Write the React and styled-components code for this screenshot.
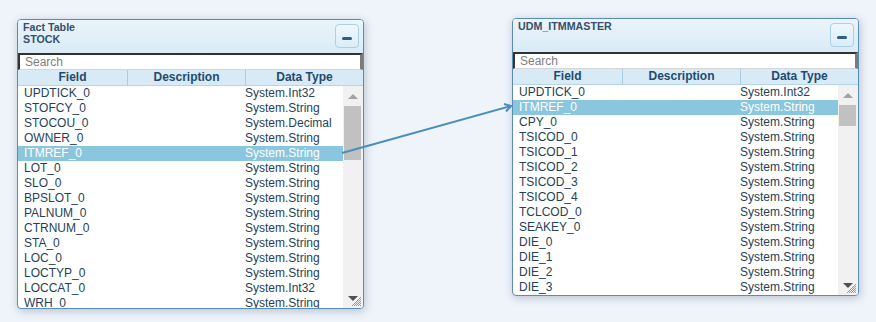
import React from "react";
import styled, { createGlobalStyle } from "styled-components";

const GlobalStyle = createGlobalStyle`
  html, body {
    margin: 0;
    padding: 0;
    background: #eef4fa;
    font-family: "Liberation Sans", Arial, sans-serif;
  }
  * { box-sizing: border-box; }
`;

const Canvas = styled.div`
  position: relative;
  width: 876px;
  height: 322px;
  overflow: hidden;
  display: flex;
  align-items: flex-start;
  gap: 148px;
  padding: 18px 0 0 17px;
`;

const Panel = styled.div`
  position: relative;
  width: 347px;
  margin-top: ${(p) => p.$offset || 0}px;
  border: 1px solid #5a8cb6;
  border-radius: 4px;
  background: #fff;
  box-shadow: 1px 2px 9px rgba(40, 60, 90, 0.28);
  overflow: hidden;
  display: flex;
  flex-direction: column;
`;

const Header = styled.div`
  height: 33px;
  display: flex;
  justify-content: space-between;
  align-items: flex-start;
  padding: 1px 4px 0 5px;
  background: linear-gradient(#eaf4fb, #d9ebf6);
`;

const Title = styled.div`
  font-size: 10.7px;
  line-height: 12px;
  font-weight: bold;
  color: #34506a;
`;

const MinButton = styled.button`
  width: 24px;
  height: 24px;
  margin-top: 3px;
  padding: 4px 0 0 0;
  border: 1px solid #a9d1e7;
  border-radius: 4px;
  background: linear-gradient(#eef7fd, #dcedf8);
  display: flex;
  align-items: center;
  justify-content: center;
`;

const Dash = styled.span`
  display: block;
  width: 10px;
  height: 3px;
  border-radius: 2px;
  background: #2e5e86;
`;

const Search = styled.input`
  display: block;
  width: 100%;
  height: 17px;
  margin: 0;
  padding: 0 0 0 5px;
  border-style: solid;
  border-width: 2px 3px 1px 2px;
  border-color: #333 #7b7b7b #d6d6d6 #333;
  font-family: "Liberation Sans", Arial, sans-serif;
  font-size: 12px;
  outline: none;
  &::placeholder { color: #808080; }
`;

const ColHeader = styled.div`
  display: grid;
  grid-template-columns: 109px 118px 118px;
  height: 16px;
  background: #d8eaf5;
  border-bottom: 1px solid #b5d6ea;
`;

const ColCell = styled.div`
  font-size: 12px;
  line-height: 15px;
  font-weight: bold;
  color: #1f4a70;
  text-align: center;
  border-left: ${(p) => (p.$first ? "none" : "1px solid #a7cde4")};
`;

const Body = styled.div`
  display: flex;
  height: ${(p) => p.$h}px;
`;

const Rows = styled.div`
  flex: 1;
  overflow: hidden;
`;

const Row = styled.div`
  display: grid;
  grid-template-columns: 227px 1fr;
  height: 15px;
  font-size: 12px;
  line-height: 15px;
  white-space: nowrap;
  color: ${(p) => (p.$sel ? "#fff" : "#263f58")};
  background: ${(p) => (p.$sel ? "#8ac6dd" : "transparent")};
`;

const FieldCell = styled.span`
  padding-left: 6px;
`;

const TypeCell = styled.span``;

const Scroll = styled.div`
  width: 20px;
  background: #f1f1f1;
  display: flex;
  flex-direction: column;
`;

const ScrollBtn = styled.div`
  height: 20px;
  display: flex;
  align-items: center;
  justify-content: center;
`;

const Tri = styled.span`
  width: 0;
  height: 0;
  border-left: 5px solid transparent;
  border-right: 5px solid transparent;
  ${(p) =>
    p.$up
      ? "border-bottom: 5px solid #a3a3a3;"
      : "border-top: 5px solid #505050;"}
`;

const Track = styled.div`
  flex: 1;
  padding: 0 2px 0 1px;
`;

const Thumb = styled.div`
  height: ${(p) => p.$h}px;
  background: #c1c1c1;
`;

const Grip = styled.svg`
  position: absolute;
  right: 2px;
  bottom: 2px;
`;

const Connector = styled.svg`
  position: absolute;
  left: 0;
  top: 0;
  pointer-events: none;
`;

const leftRows = [
  ["UPDTICK_0", "System.Int32"],
  ["STOFCY_0", "System.String"],
  ["STOCOU_0", "System.Decimal"],
  ["OWNER_0", "System.String"],
  ["ITMREF_0", "System.String", true],
  ["LOT_0", "System.String"],
  ["SLO_0", "System.String"],
  ["BPSLOT_0", "System.String"],
  ["PALNUM_0", "System.String"],
  ["CTRNUM_0", "System.String"],
  ["STA_0", "System.String"],
  ["LOC_0", "System.String"],
  ["LOCTYP_0", "System.String"],
  ["LOCCAT_0", "System.Int32"],
  ["WRH_0", "System.String"],
];

const rightRows = [
  ["UPDTICK_0", "System.Int32"],
  ["ITMREF_0", "System.String", true],
  ["CPY_0", "System.String"],
  ["TSICOD_0", "System.String"],
  ["TSICOD_1", "System.String"],
  ["TSICOD_2", "System.String"],
  ["TSICOD_3", "System.String"],
  ["TSICOD_4", "System.String"],
  ["TCLCOD_0", "System.String"],
  ["SEAKEY_0", "System.String"],
  ["DIE_0", "System.String"],
  ["DIE_1", "System.String"],
  ["DIE_2", "System.String"],
  ["DIE_3", "System.String"],
];

function GripIcon() {
  const dots = [];
  for (let y = 0; y < 9; y++) {
    for (let x = 0; x < 9; x++) {
      if (x + y >= 8 && (x + y) % 2 === 0) {
        dots.push(<rect key={`${x}-${y}`} x={x} y={y} width="1" height="1" fill="#6f9fd8" />);
      }
    }
  }
  return (
    <Grip width="9" height="9" viewBox="0 0 9 9">
      {dots}
    </Grip>
  );
}

function TablePanel({ title, rows, bodyH, thumbH, offset }) {
  return (
    <Panel $offset={offset}>
      <Header>
        <Title>
          {title.map((t) => (
            <div key={t}>{t}</div>
          ))}
        </Title>
        <MinButton aria-label="minimize">
          <Dash />
        </MinButton>
      </Header>
      <Search placeholder="Search" />
      <ColHeader>
        <ColCell $first>Field</ColCell>
        <ColCell>Description</ColCell>
        <ColCell>Data Type</ColCell>
      </ColHeader>
      <Body $h={bodyH}>
        <Rows>
          {rows.map(([f, t, sel]) => (
            <Row key={f} $sel={sel}>
              <FieldCell>{f}</FieldCell>
              <TypeCell>{t}</TypeCell>
            </Row>
          ))}
        </Rows>
        <Scroll>
          <ScrollBtn>
            <Tri $up />
          </ScrollBtn>
          <Track>
            <Thumb $h={thumbH} />
          </Track>
          <ScrollBtn>
            <Tri />
          </ScrollBtn>
        </Scroll>
      </Body>
      <GripIcon />
    </Panel>
  );
}

export default function App() {
  return (
    <>
      <GlobalStyle />
      <Canvas>
        <TablePanel
          title={["Fact Table", "STOCK"]}
          rows={leftRows}
          bodyH={222}
          thumbH={54}
          offset={1}
        />
        <TablePanel
          title={["UDM_ITMMASTER"]}
          rows={rightRows}
          bodyH={210}
          thumbH={21}
          offset={0}
        />
        <Connector width="876" height="322" viewBox="0 0 876 322">
          <line x1="342" y1="153" x2="511" y2="106" stroke="#4a8ebb" strokeWidth="2" />
          <polyline
            points="504,104 511,106 506,111.5"
            fill="none"
            stroke="#4a8ebb"
            strokeWidth="2"
            strokeLinejoin="miter"
          />
        </Connector>
      </Canvas>
    </>
  );
}
